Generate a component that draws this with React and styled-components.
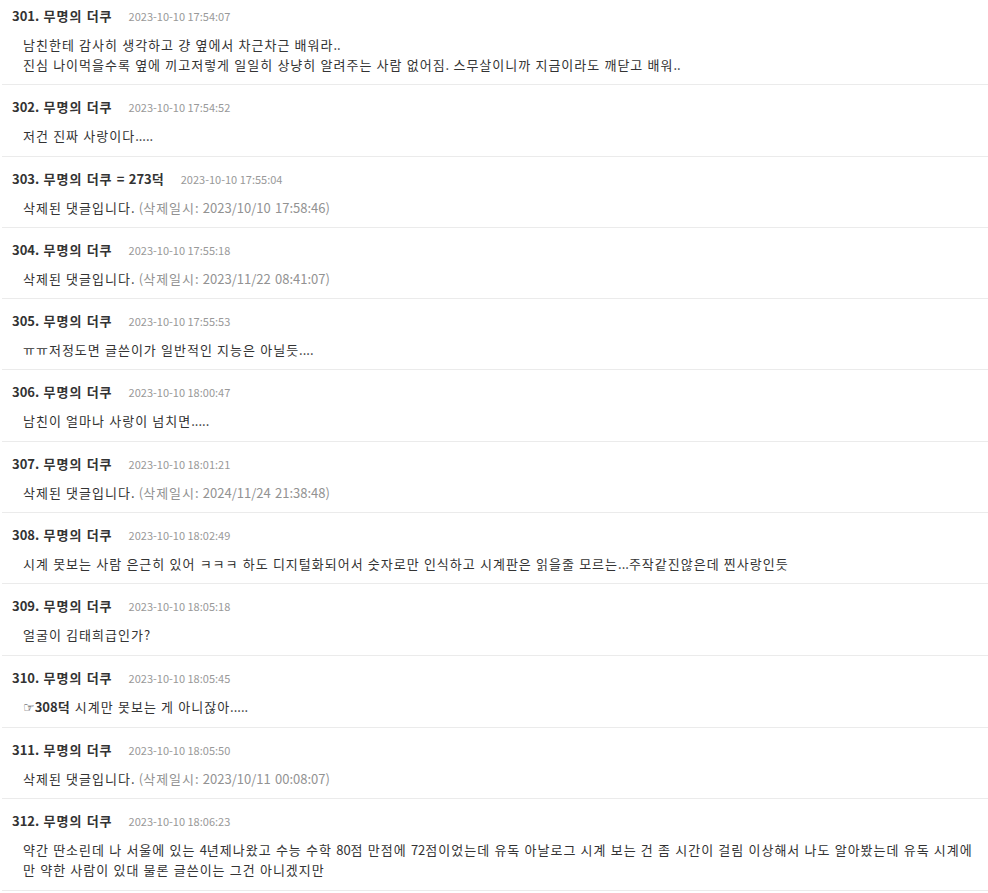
import React from "react"
import styled, { createGlobalStyle } from "styled-components"

const GlobalStyle = createGlobalStyle`
    html, body {
        margin: 0;
        padding: 0;
        background: #fff;
    }
    body {
        font-family: "Noto Sans CJK KR", "Noto Sans", sans-serif;
        color: #333;
    }
`

const comments = [
    { no: 301, name: "무명의 더쿠", date: "2023-10-10 17:54:07", lines: ["남친한테 감사히 생각하고 걍 옆에서 차근차근 배워라..", "진심 나이먹을수록 옆에 끼고저렇게 일일히 상냥히 알려주는 사람 없어짐. 스무살이니까 지금이라도 깨닫고 배워.."] },
    { no: 302, name: "무명의 더쿠", date: "2023-10-10 17:54:52", lines: ["저건 진짜 사랑이다....."] },
    { no: 303, name: "무명의 더쿠 = 273덕", date: "2023-10-10 17:55:04", deleted: "2023/10/10 17:58:46" },
    { no: 304, name: "무명의 더쿠", date: "2023-10-10 17:55:18", deleted: "2023/11/22 08:41:07" },
    { no: 305, name: "무명의 더쿠", date: "2023-10-10 17:55:53", lines: ["ㅠㅠ저정도면 글쓴이가 일반적인 지능은 아닐듯...."] },
    { no: 306, name: "무명의 더쿠", date: "2023-10-10 18:00:47", lines: ["남친이 얼마나 사랑이 넘치면....."] },
    { no: 307, name: "무명의 더쿠", date: "2023-10-10 18:01:21", deleted: "2024/11/24 21:38:48" },
    { no: 308, name: "무명의 더쿠", date: "2023-10-10 18:02:49", lines: ["시계 못보는 사람 은근히 있어 ㅋㅋㅋ 하도 디지털화되어서 숫자로만 인식하고 시계판은 읽을줄 모르는...주작같진않은데 찐사랑인듯"] },
    { no: 309, name: "무명의 더쿠", date: "2023-10-10 18:05:18", lines: ["얼굴이 김태희급인가?"] },
    { no: 310, name: "무명의 더쿠", date: "2023-10-10 18:05:45", reply: "308덕", lines: [" 시계만 못보는 게 아니잖아....."] },
    { no: 311, name: "무명의 더쿠", date: "2023-10-10 18:05:50", deleted: "2023/10/11 00:08:07" },
    { no: 312, name: "무명의 더쿠", date: "2023-10-10 18:06:23", lines: ["약간 딴소린데 나 서울에 있는 4년제나왔고 수능 수학 80점 만점에 72점이었는데 유독 아날로그 시계 보는 건 좀 시간이 걸림 이상해서 나도 알아봤는데 유독 시계에", "만 약한 사람이 있대 물론 글쓴이는 그건 아니겠지만"] },
]

// hangul runs get a little extra tracking so the text runs as wide as the original
const HANGUL = /([\u1100-\u11FF\u3131-\u318E\uAC00-\uD7A3]+)/
const K = ({ children }) =>
    String(children).split(HANGUL).map((part, i) =>
        i % 2 ? <Hangul key={i}>{part}</Hangul> : part
    )

const App = () => {
    return (
        <>
            <GlobalStyle />
            <List>
                {comments.map(c => (
                    <Item key={c.no}>
                        <Header>
                            <Name><K>{`${c.no}. ${c.name}`}</K></Name>
                            <DateText>{c.date}</DateText>
                        </Header>
                        <Body>
                            {c.deleted ? (
                                <Line>
                                    <K>삭제된 댓글입니다.</K> <Muted>(<K>삭제일시</K>: {c.deleted})</Muted>
                                </Line>
                            ) : (
                                c.lines.map((l, i) => (
                                    <Line key={i}>
                                        {i === 0 && c.reply && <Reply><Hand>☞</Hand><K>{c.reply}</K></Reply>}
                                        <K>{l}</K>
                                    </Line>
                                ))
                            )}
                        </Body>
                    </Item>
                ))}
            </List>
        </>
    )
}

export default App

const List = styled.ul`
    list-style: none;
    margin: 0 0 0 2px;
    padding: 0;
`

const Item = styled.li`
    padding: 12px 0 9.3px 10px;
    border-bottom: 1px solid #ebebeb;

    &:first-child {
        padding-top: 6px;
    }
`

const Header = styled.div`
    display: flex;
    align-items: baseline;
    gap: 16px;
    height: 20px;
    line-height: 20px;
`

const Name = styled.span`
    font-size: 13px;
    font-weight: bold;
    color: #333;
    word-spacing: 1.3px;
    white-space: pre;
`

const DateText = styled.span`
    font-size: 11px;
    color: #999;
`

const Body = styled.div`
    margin-top: 9px;
    padding-left: 11px;
    font-size: 13px;
    line-height: 20px;
    color: #333;
    word-spacing: 1.3px;
`

const Line = styled.div`
    white-space: pre;
`

const Hangul = styled.span`
    letter-spacing: 1px;
`

const Muted = styled.span`
    color: #929292;
`

const Reply = styled.span`
    font-weight: bold;
`

const Hand = styled.span`
    font-family: "DejaVu Sans", sans-serif;
    font-weight: normal;
`
